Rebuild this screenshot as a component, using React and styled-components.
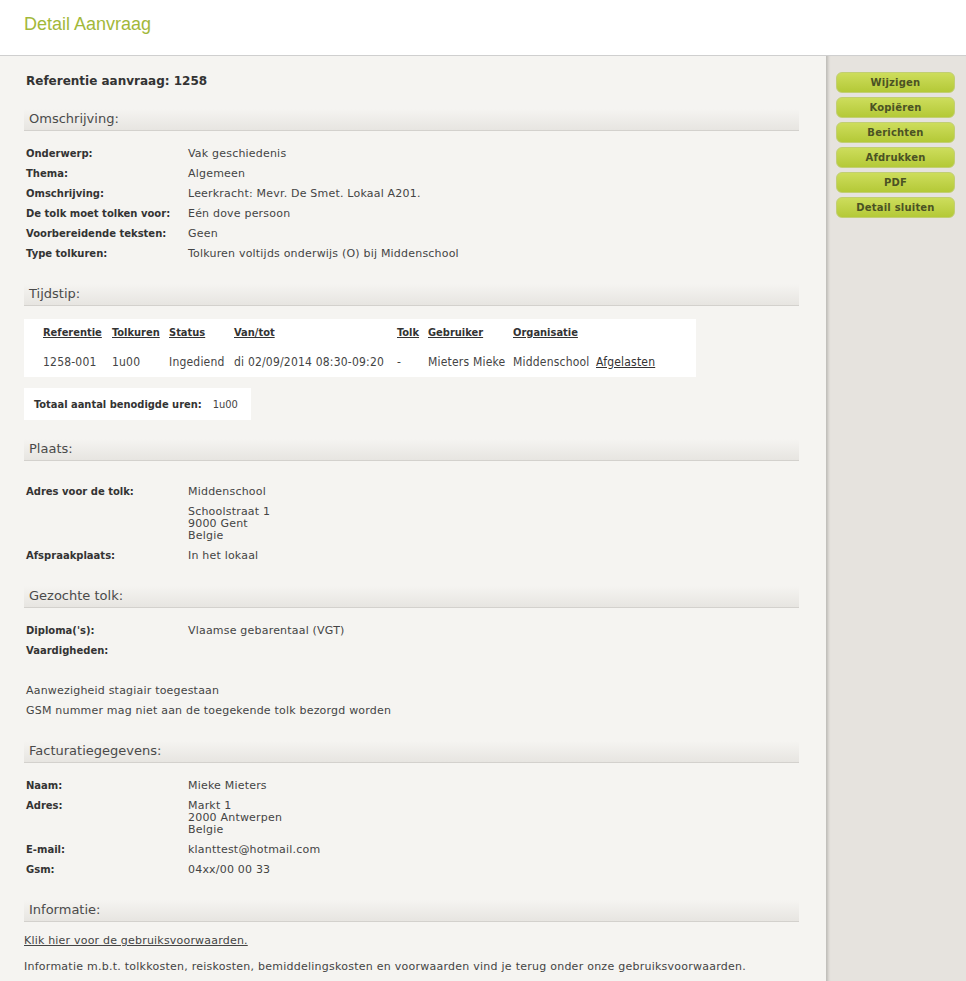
import React from "react";
import styled, { createGlobalStyle } from "styled-components";

const GlobalStyle = createGlobalStyle`
  html, body {
    margin: 0;
    padding: 0;
    background: #f5f4f1;
  }
  body {
    font-family: "DejaVu Sans", Verdana, sans-serif;
    font-size: 11px;
    color: #444;
  }
`;

const Page = styled.div`
  min-height: 981px;
  display: flex;
  flex-direction: column;
`;

const TopBar = styled.header`
  height: 55px;
  background: #fff;
  border-bottom: 1px solid #cfcfcf;
  padding-left: 24px;
  display: flex;
  align-items: flex-start;
`;

const Title = styled.h1`
  margin: 13px 0 0;
  font-family: "Liberation Sans", Arial, sans-serif;
  font-weight: normal;
  font-size: 18px;
  line-height: 22px;
  color: #a2b83a;
`;

const Body = styled.div`
  flex: 1;
  display: flex;
`;

const Main = styled.main`
  width: 826px;
  box-sizing: border-box;
  padding: 17px 27px 0 24px;
`;

const Sidebar = styled.aside`
  flex: 1;
  background: #e6e3de;
  box-shadow: inset 4px 0 3px -2px rgba(0, 0, 0, 0.18);
  padding: 16px 0 0 10px;
  display: flex;
  flex-direction: column;
  gap: 4px;
`;

const ActionButton = styled.button`
  width: 119px;
  height: 21px;
  padding: 0;
  border: 1px solid #c2cf72;
  border-radius: 6px;
  background: linear-gradient(#cddd5c, #b4c937);
  font-family: "DejaVu Sans", Verdana, sans-serif;
  font-weight: bold;
  font-size: 10px;
  letter-spacing: 0.2px;
  color: #4b5224;
  cursor: pointer;
`;

const RefTitle = styled.h2`
  margin: 0 0 0 2px;
  font-size: 12px;
  line-height: 16px;
  font-weight: bold;
  color: #333;
`;

const SectionHead = styled.h3`
  margin: ${(p) => p.$top ?? 20}px 0 0;
  height: 21px;
  border-bottom: 1px solid #d3d1cd;
  background: linear-gradient(#f5f4f1, #e7e5e1);
  padding-left: 5px;
  font-size: 13px;
  font-weight: normal;
  line-height: 20px;
  color: #4a4a4a;
`;

const Fields = styled.dl`
  margin: ${(p) => p.$top ?? 13}px 0 0 2px;
  display: grid;
  grid-template-columns: 162px 1fr;
`;

const Label = styled.dt`
  padding: 4px 0;
  line-height: 12px;
  font-size: 10px;
  font-weight: bold;
  color: #333;
`;

const Value = styled.dd`
  margin: 0;
  padding: 4px 0;
  line-height: 12px;
  letter-spacing: 0.2px;
  color: #444;
`;

const Address = styled.div`
  margin-top: 8px;
`;

const Note = styled.p`
  margin: 0 0 0 2px;
  padding: 4px 0;
  line-height: 12px;
  letter-spacing: 0.2px;
`;

const Notes = styled.div`
  margin-top: 20px;
`;

const TableBox = styled.div`
  margin-top: 13px;
  width: 672px;
  height: 58px;
  box-sizing: border-box;
  background: #fff;
  padding: 5px 0 0 19px;
`;

const Table = styled.table`
  border-collapse: collapse;
  font-family: "DejaVu Sans Condensed", Tahoma, sans-serif;
  font-size: 12px;
  color: #444;
`;

const Th = styled.th`
  text-align: left;
  padding: 0;
  height: 16px;
  font-size: 11px;
  font-weight: bold;
  color: #333;
  text-decoration: underline;
  white-space: nowrap;
`;

const Td = styled.td`
  padding: 14px 0 0;
  height: 16px;
  letter-spacing: 0.2px;
  white-space: nowrap;
`;

const CellLink = styled.a`
  color: #333;
  text-decoration: underline;
`;

const TotalBox = styled.div`
  margin-top: 11px;
  width: 227px;
  height: 32px;
  box-sizing: border-box;
  background: #fff;
  padding-left: 10px;
  display: flex;
  align-items: center;
  gap: 11px;
  font-family: "DejaVu Sans Condensed", Tahoma, sans-serif;
  font-size: 11px;
`;

const TotalLabel = styled.span`
  font-weight: bold;
  color: #333;
`;

const TermsLink = styled.a`
  display: block;
  margin-top: 13px;
  line-height: 12px;
  letter-spacing: 0.2px;
  color: #444;
  text-decoration: underline;
`;

const InfoText = styled.p`
  margin: 14px 0 0;
  line-height: 12px;
  letter-spacing: 0.25px;
`;

const columns = [69, 57, 65, 163, 31, 85, 83, 80];
const headers = ["Referentie", "Tolkuren", "Status", "Van/tot", "Tolk", "Gebruiker", "Organisatie", ""];
const row = ["1258-001", "1u00", "Ingediend", "di 02/09/2014 08:30-09:20", "-", "Mieters Mieke", "Middenschool"];

const actions = ["Wijzigen", "Kopiëren", "Berichten", "Afdrukken", "PDF", "Detail sluiten"];

export default function App() {
  return (
    <Page>
      <GlobalStyle />
      <TopBar>
        <Title>Detail Aanvraag</Title>
      </TopBar>
      <Body>
        <Main>
          <RefTitle>Referentie aanvraag: 1258</RefTitle>

          <SectionHead>Omschrijving:</SectionHead>
          <Fields>
            <Label>Onderwerp:</Label>
            <Value>Vak geschiedenis</Value>
            <Label>Thema:</Label>
            <Value>Algemeen</Value>
            <Label>Omschrijving:</Label>
            <Value>Leerkracht: Mevr. De Smet. Lokaal A201.</Value>
            <Label>De tolk moet tolken voor:</Label>
            <Value>Eén dove persoon</Value>
            <Label>Voorbereidende teksten:</Label>
            <Value>Geen</Value>
            <Label>Type tolkuren:</Label>
            <Value>Tolkuren voltijds onderwijs (O) bij Middenschool</Value>
          </Fields>

          <SectionHead>Tijdstip:</SectionHead>
          <TableBox>
            <Table>
              <colgroup>
                {columns.map((w, i) => (
                  <col key={i} style={{ width: w }} />
                ))}
              </colgroup>
              <thead>
                <tr>
                  {headers.map((h, i) => (
                    <Th key={i}>{h}</Th>
                  ))}
                </tr>
              </thead>
              <tbody>
                <tr>
                  {row.map((c, i) => (
                    <Td key={i}>{c}</Td>
                  ))}
                  <Td>
                    <CellLink href="#">Afgelasten</CellLink>
                  </Td>
                </tr>
              </tbody>
            </Table>
          </TableBox>
          <TotalBox>
            <TotalLabel>Totaal aantal benodigde uren:</TotalLabel>
            <span>1u00</span>
          </TotalBox>

          <SectionHead $top={19}>Plaats:</SectionHead>
          <Fields $top={21}>
            <Label>Adres voor de tolk:</Label>
            <Value>
              Middenschool
              <Address>
                Schoolstraat 1<br />
                9000 Gent<br />
                Belgie
              </Address>
            </Value>
            <Label>Afspraakplaats:</Label>
            <Value>In het lokaal</Value>
          </Fields>

          <SectionHead>Gezochte tolk:</SectionHead>
          <Fields>
            <Label>Diploma('s):</Label>
            <Value>Vlaamse gebarentaal (VGT)</Value>
            <Label>Vaardigheden:</Label>
            <Value></Value>
          </Fields>
          <Notes>
            <Note>Aanwezigheid stagiair toegestaan</Note>
            <Note>GSM nummer mag niet aan de toegekende tolk bezorgd worden</Note>
          </Notes>

          <SectionHead>Facturatiegegevens:</SectionHead>
          <Fields>
            <Label>Naam:</Label>
            <Value>Mieke Mieters</Value>
            <Label>Adres:</Label>
            <Value>
              Markt 1<br />
              2000 Antwerpen<br />
              Belgie
            </Value>
            <Label>E-mail:</Label>
            <Value>klanttest@hotmail.com</Value>
            <Label>Gsm:</Label>
            <Value>04xx/00 00 33</Value>
          </Fields>

          <SectionHead>Informatie:</SectionHead>
          <TermsLink href="#">Klik hier voor de gebruiksvoorwaarden.</TermsLink>
          <InfoText>
            Informatie m.b.t. tolkkosten, reiskosten, bemiddelingskosten en voorwaarden vind je terug onder onze
            gebruiksvoorwaarden.
          </InfoText>
        </Main>
        <Sidebar>
          {actions.map((a) => (
            <ActionButton key={a}>{a}</ActionButton>
          ))}
        </Sidebar>
      </Body>
    </Page>
  );
}
